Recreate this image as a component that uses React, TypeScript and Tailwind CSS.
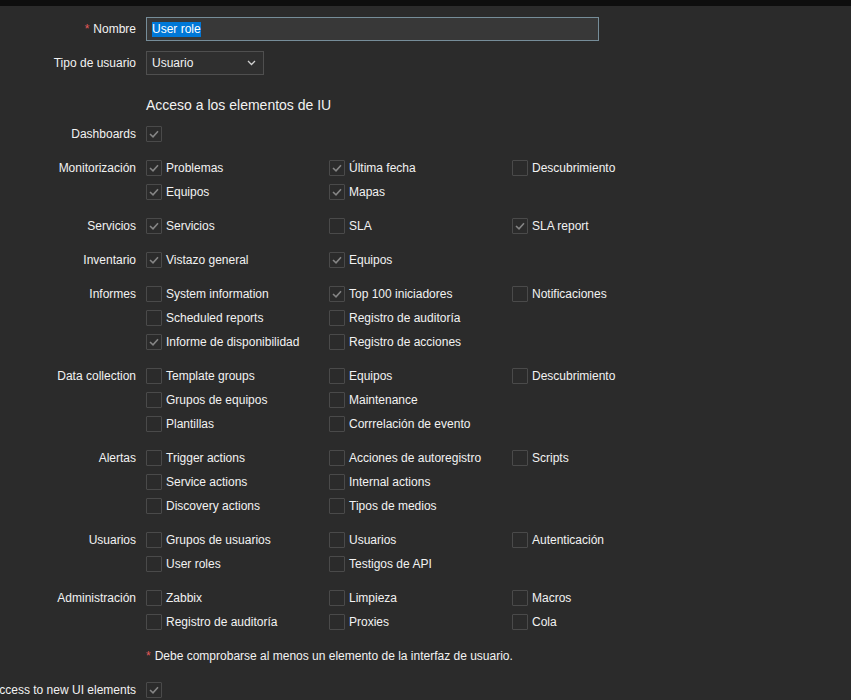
import React from "react";

type Item = { label: string; checked?: boolean } | null;

const groups: { label: string; rows: Item[][] }[] = [
  {
    label: "Monitorización",
    rows: [
      [{ label: "Problemas", checked: true }, { label: "Última fecha", checked: true }, { label: "Descubrimiento" }],
      [{ label: "Equipos", checked: true }, { label: "Mapas", checked: true }, null],
    ],
  },
  {
    label: "Servicios",
    rows: [[{ label: "Servicios", checked: true }, { label: "SLA" }, { label: "SLA report", checked: true }]],
  },
  {
    label: "Inventario",
    rows: [[{ label: "Vistazo general", checked: true }, { label: "Equipos", checked: true }, null]],
  },
  {
    label: "Informes",
    rows: [
      [{ label: "System information" }, { label: "Top 100 iniciadores", checked: true }, { label: "Notificaciones" }],
      [{ label: "Scheduled reports" }, { label: "Registro de auditoría" }, null],
      [{ label: "Informe de disponibilidad", checked: true }, { label: "Registro de acciones" }, null],
    ],
  },
  {
    label: "Data collection",
    rows: [
      [{ label: "Template groups" }, { label: "Equipos" }, { label: "Descubrimiento" }],
      [{ label: "Grupos de equipos" }, { label: "Maintenance" }, null],
      [{ label: "Plantillas" }, { label: "Corrrelación de evento" }, null],
    ],
  },
  {
    label: "Alertas",
    rows: [
      [{ label: "Trigger actions" }, { label: "Acciones de autoregistro" }, { label: "Scripts" }],
      [{ label: "Service actions" }, { label: "Internal actions" }, null],
      [{ label: "Discovery actions" }, { label: "Tipos de medios" }, null],
    ],
  },
  {
    label: "Usuarios",
    rows: [
      [{ label: "Grupos de usuarios" }, { label: "Usuarios" }, { label: "Autenticación" }],
      [{ label: "User roles" }, { label: "Testigos de API" }, null],
    ],
  },
  {
    label: "Administración",
    rows: [
      [{ label: "Zabbix" }, { label: "Limpieza" }, { label: "Macros" }],
      [{ label: "Registro de auditoría" }, { label: "Proxies" }, { label: "Cola" }],
    ],
  },
];

function Box({ checked }: { checked?: boolean }) {
  return (
    <span className="w-4 h-4 shrink-0 border border-[#4a4a4a] bg-[#2b2b2b] rounded-[1px] flex items-center justify-center">
      {checked && (
        <svg width="10" height="8" viewBox="0 0 10 8">
          <path d="M1 4 L4 6.8 L9 1.2" fill="none" stroke="#858585" strokeWidth="1.6" />
        </svg>
      )}
    </span>
  );
}

function Label({ children }: { children: React.ReactNode }) {
  return (
    <div className="w-[136px] shrink-0 flex justify-end whitespace-nowrap h-6 items-center">
      {children}
    </div>
  );
}

export default function App() {
  return (
    <div
      className="w-[851px] h-[700px] overflow-hidden bg-[#2b2b2b] text-[#f2f2f2] text-[12px]"
      style={{ fontFamily: '"Liberation Sans", Arial, sans-serif' }}
    >
      <div className="h-[6px] bg-[#0e0e0e]" />
      <div className="pt-[6px]">
        {/* Nombre */}
        <div className="flex gap-[10px] py-[5px]">
          <Label>
            <span className="text-[#e45959] mr-[4px]">*</span>Nombre
          </Label>
          <div className="w-[453px] h-6 border border-[#768d99] bg-[#383838] flex items-center px-[5px]">
            <span className="bg-[#0078d7] text-white leading-[15px]">User role</span>
          </div>
        </div>
        {/* Tipo */}
        <div className="flex gap-[10px] py-[5px]">
          <Label>Tipo de usuario</Label>
          <div className="w-[118px] h-6 border border-[#4f4f4f] bg-[#2f2f2f] flex items-center justify-between px-[5px]">
            <span>Usuario</span>
            <svg width="9" height="6" viewBox="0 0 9 6" className="mr-[2px]">
              <path d="M1 1 L4.5 4.5 L8 1" fill="none" stroke="#d0d0d0" strokeWidth="1.3" />
            </svg>
          </div>
        </div>
        {/* Heading */}
        <div className="flex gap-[10px] pt-[16px] pb-[3px]">
          <div className="w-[136px] shrink-0" />
          <div className="text-[14px] leading-[18px]">Acceso a los elementos de IU</div>
        </div>
        {/* Dashboards */}
        <div className="flex gap-[10px] py-[5px]">
          <Label>Dashboards</Label>
          <div className="h-6 flex items-center">
            <Box checked />
          </div>
        </div>
        {groups.map((g, gi) => (
          <div key={gi} className="flex gap-[10px] py-[5px]">
            <Label>{g.label}</Label>
            <div className="flex flex-col">
              {g.rows.map((row, ri) => (
                <div key={ri} className="grid grid-cols-[183px_183px_183px] h-6">
                  {row.map((it, ii) =>
                    it ? (
                      <div key={ii} className="flex items-center gap-[4px] whitespace-nowrap">
                        <Box checked={it.checked} />
                        <span>{it.label}</span>
                      </div>
                    ) : (
                      <div key={ii} />
                    )
                  )}
                </div>
              ))}
            </div>
          </div>
        ))}
        {/* Note */}
        <div className="flex gap-[10px] py-[5px]">
          <div className="w-[136px] shrink-0" />
          <div className="h-6 flex items-center">
            <span className="text-[#e45959] mr-[4px]">*</span>Debe comprobarse al menos un elemento de la interfaz de usuario.
          </div>
        </div>
        {/* Access */}
        <div className="flex gap-[10px] py-[5px]">
          <Label>Access to new UI elements</Label>
          <div className="h-6 flex items-center">
            <Box checked />
          </div>
        </div>
      </div>
    </div>
  );
}
